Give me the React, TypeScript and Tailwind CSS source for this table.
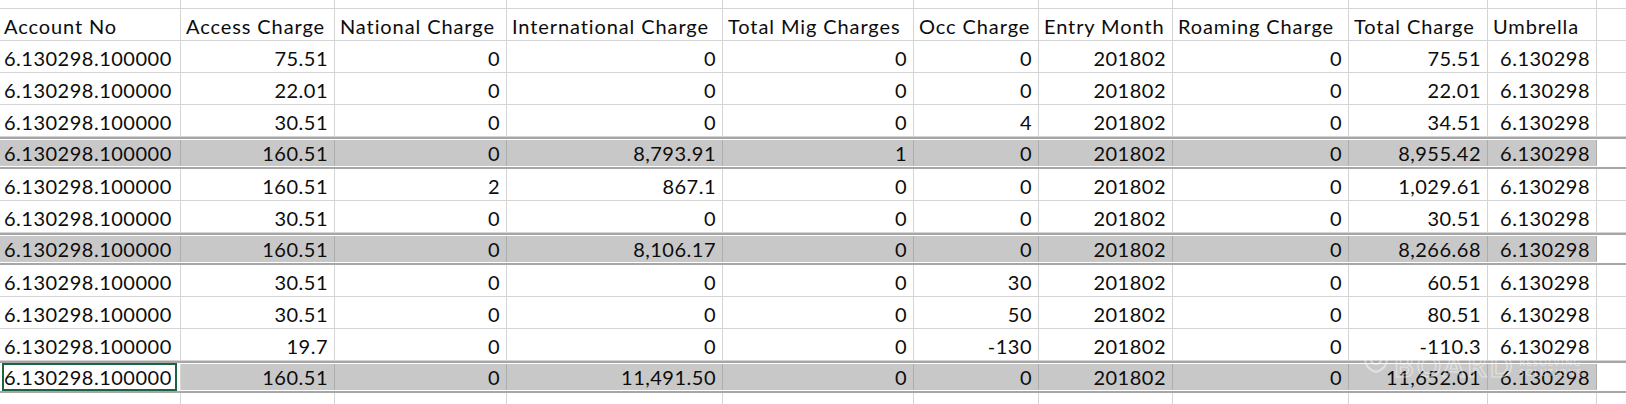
import React from "react";

const WIDTHS = [
    "w-[181px]",
    "w-[154px]",
    "w-[172px]",
    "w-[216px]",
    "w-[191px]",
    "w-[125px]",
    "w-[134px]",
    "w-[176px]",
    "w-[139px]",
    "w-[109px]",
];

const HEADERS = [
    "Account No",
    "Access Charge",
    "National Charge",
    "International Charge",
    "Total Mig Charges",
    "Occ Charge",
    "Entry Month",
    "Roaming Charge",
    "Total Charge",
    "Umbrella",
];

type Row = { cells: string[]; hi?: boolean; selected?: boolean };

const ROWS: Row[] = [
    { cells: ["6.130298.100000", "75.51", "0", "0", "0", "0", "201802", "0", "75.51", "6.130298"] },
    { cells: ["6.130298.100000", "22.01", "0", "0", "0", "0", "201802", "0", "22.01", "6.130298"] },
    { cells: ["6.130298.100000", "30.51", "0", "0", "0", "4", "201802", "0", "34.51", "6.130298"] },
    { cells: ["6.130298.100000", "160.51", "0", "8,793.91", "1", "0", "201802", "0", "8,955.42", "6.130298"], hi: true },
    { cells: ["6.130298.100000", "160.51", "2", "867.1", "0", "0", "201802", "0", "1,029.61", "6.130298"] },
    { cells: ["6.130298.100000", "30.51", "0", "0", "0", "0", "201802", "0", "30.51", "6.130298"] },
    { cells: ["6.130298.100000", "160.51", "0", "8,106.17", "0", "0", "201802", "0", "8,266.68", "6.130298"], hi: true },
    { cells: ["6.130298.100000", "30.51", "0", "0", "0", "30", "201802", "0", "60.51", "6.130298"] },
    { cells: ["6.130298.100000", "30.51", "0", "0", "0", "50", "201802", "0", "80.51", "6.130298"] },
    { cells: ["6.130298.100000", "19.7", "0", "0", "0", "-130", "201802", "0", "-110.3", "6.130298"] },
    { cells: ["6.130298.100000", "160.51", "0", "11,491.50", "0", "0", "201802", "0", "11,652.01", "6.130298"], hi: true, selected: true },
    { cells: ["6.130298.100000", "67.48", "0", "0", "0", "100", "201802", "0", "73.33", "6.130298"] },
];

const FONT = "font-['Lato','Open_Sans',sans-serif] text-[20px] tracking-[0.5px] text-[#0c0c0c]";

const DataRow = ({ row }: { row: Row }) => {
    if (row.hi) {
        return (
            <div className="flex h-[32px] border-y-2 border-[#a6a6a6] bg-white py-px">
                {row.cells.map((value, i) => (
                    <div
                        key={i}
                        className={`relative shrink-0 ${WIDTHS[i]} h-full border-r leading-[26px] ${
                            i === 0 ? "pl-[4px] text-left" : "pr-[6px] text-right"
                        } ${row.selected && i === 0 ? "bg-white border-[#d4d4d4]" : "bg-[#c8c8c8] border-[#adadad]"}`}
                    >
                        {row.selected && i === 0 && (
                            <div className="absolute left-[2px] right-[3px] -top-px -bottom-px border-2 border-[#1c6343]" />
                        )}
                        <span className="relative">{value}</span>
                    </div>
                ))}
                <div className="flex-1" />
            </div>
        );
    }

    return (
        <div className="flex h-[32px] shrink-0 border-b border-[#d4d4d4]">
            {row.cells.map((value, i) => (
                <div
                    key={i}
                    className={`shrink-0 ${WIDTHS[i]} border-r border-[#d4d4d4] pt-[4px] leading-[26px] ${
                        i === 0 ? "pl-[4px] text-left" : "pr-[6px] text-right"
                    }`}
                >
                    {value}
                </div>
            ))}
            <div className="flex-1" />
        </div>
    );
};

// faint logo stamped over the lower right corner
const Watermark = () => (
    <div className="pointer-events-none absolute left-[1362px] top-[342px] flex items-start gap-[4px] opacity-45">
        <svg width="28" height="32" viewBox="0 0 28 32" fill="none" stroke="white" strokeWidth="2">
            <path d="M3 3h22v14c0 7-5 11-11 13C8 28 3 24 3 17z" />
            <path d="M9 8v9c0 3 2 5 5 5s5-2 5-5V8" />
        </svg>
        <div className="mt-[10px] font-['Lato',sans-serif] text-[30px] font-bold leading-[26px] tracking-[3px] text-transparent [-webkit-text-stroke:1.2px_white]">
            BOARD
        </div>
        <div className="mt-[16px] flex flex-col font-['Lato',sans-serif] text-[9px] leading-[10px] tracking-[1.5px] text-white">
            <span>RESOLVING</span>
            <span>SOLUTIONS</span>
        </div>
    </div>
);

export default function App() {
    return (
        <div className={`relative h-[404px] w-[1626px] overflow-hidden bg-white ${FONT}`}>
            {/* row above the header, cut off */}
            <div className="flex h-[9px] border-b border-[#d4d4d4]">
                {WIDTHS.map((w, i) => (
                    <div key={i} className={`shrink-0 ${w} border-r border-[#d4d4d4]`} />
                ))}
            </div>

            <div className="flex h-[32px] border-b border-[#d4d4d4]">
                {HEADERS.map((label, i) => (
                    <div
                        key={i}
                        className={`shrink-0 ${WIDTHS[i]} whitespace-nowrap border-r border-[#d4d4d4] pt-[4px] leading-[26px] tracking-[0.9px] ${
                            i === 0 ? "pl-[4px]" : "pl-[5px]"
                        }`}
                    >
                        {label}
                    </div>
                ))}
                <div className="flex-1" />
            </div>

            {ROWS.map((row, i) => (
                <DataRow key={i} row={row} />
            ))}

            <Watermark />
        </div>
    );
}
